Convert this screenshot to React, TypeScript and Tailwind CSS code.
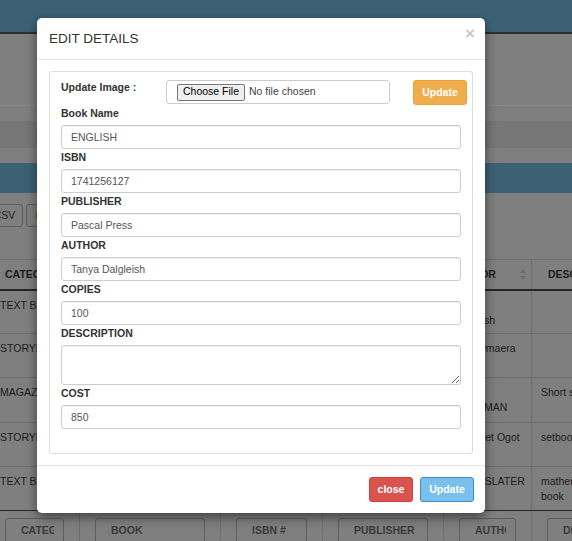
import React from "react";

const grid = "grid grid-cols-[90px_141px_102px_121px_88px_120px] -ml-[10px] w-max";

function SortIcon() {
  return (
    <svg width="6" height="11" viewBox="0 0 6 11" className="shrink-0">
      <path d="M3 0 L6 4 L0 4 Z" fill="#6b6b6b" />
      <path d="M3 11 L6 7 L0 7 Z" fill="#6b6b6b" />
    </svg>
  );
}

const headers = [
  { t: "CATEGORY", cls: "pl-[15px]" },
  { t: "BOOK NAME", cls: "pl-[15px]" },
  { t: "ISBN #", cls: "pl-[15px]" },
  { t: "PUBLISHER", cls: "pl-[15px]" },
  { t: "AUTHOR", cls: "pl-[7px]" },
  { t: "DESCRIPTION", cls: "pl-[16px]" },
];

const rows = [
  { b: "", c: ["TEXT BOOK", "ENGLISH", "1741256127", "Pascal Press", "Tanya\nDalgleish", ""] },
  { b: "border-t border-[#6e6e6e]", c: ["STORYBOOK", "THE RIVER", "1741256128", "Longhorn", "John Omaera", ""] },
  { b: "border-t border-[#6e6e6e]", c: ["MAGAZINE", "WEEKLY", "1741256129", "Oxford", "ALAN\nGOODMAN", "Short stories"] },
  { b: "border-t border-[#6e6e6e]", c: ["STORYBOOK", "THE PROMISED LAND", "1741256130", "EAEP", "Margaret Ogot", "setbook"] },
  { b: "border-t border-[#6e6e6e]", c: ["TEXT BOOK", "MATHEMATICS", "1741256131", "KLB", "ROSE SLATER", "mathematics book"] },
];

const cellPad = ["pl-[10px]", "pl-[9px]", "pl-[9px]", "pl-[9px]", "pl-[8px] pr-[2px] whitespace-pre-line", "pl-[9px] pr-[30px]"];

const footer = ["CATEGORY", "BOOK", "ISBN #", "PUBLISHER", "AUTHOR", "DESCRIPTION"];

function Field({ label, value }: { label: string; value: string }) {
  return (
    <div>
      <div className="h-[16px] text-[10.5px] leading-[16px] font-bold text-[#333]">{label}</div>
      <input
        readOnly
        value={value}
        className="mt-[4px] block h-[24px] w-full rounded-[3px] border border-[#ccc] bg-white px-[9px] text-[10.5px] text-[#555] shadow-[inset_0_1px_1px_rgba(0,0,0,0.075)] outline-none"
      />
    </div>
  );
}

export default function App() {
  return (
    <div className="relative h-[541px] w-[572px] overflow-hidden bg-[#7f7f7f] font-['Liberation_Sans',Arial,sans-serif] text-[10.5px] text-[#1c1c1c]">
      {/* background page */}
      <div className="h-[32px] bg-[#3c6177]" />
      <div className="h-[2px] bg-[#2f2f2f]" />
      <div className="h-[71px]" />
      <div className="h-px bg-[#878787]" />
      <div className="h-[15px]" />
      <div className="h-[27px] bg-[#777777]" />
      <div className="h-[15px]" />
      <div className="h-[30px] bg-[#3c6177]" />
      <div className="flex h-[66px] gap-[3px] pt-[11px] -ml-[14px]">
        <div className="flex h-[23px] w-[37px] items-center justify-center rounded-[3px] border border-[#5e5e5e] text-[#1f1f1f]">CSV</div>
        <div className="flex h-[23px] w-[44px] items-center justify-center rounded-[3px] border border-[#5e5e5e] text-[#6b4a1f]">Excel</div>
      </div>

      {/* table header */}
      <div className={`${grid} border-t border-[#6e6e6e] border-b-2 border-b-[#262626]`}>
        {headers.map((h, i) => (
          <div key={i} className={`flex h-[29px] items-center justify-between border-r border-[#6e6e6e] pr-[5px] font-bold whitespace-nowrap overflow-hidden ${h.cls}`}>
            <span>{h.t}</span>
            <SortIcon />
          </div>
        ))}
      </div>

      {/* rows */}
      {rows.map((r, ri) => (
        <div key={ri} className={`${grid} ${r.b}`}>
          {r.c.map((c, ci) => (
            <div key={ci} className={`${ri === 0 ? "h-[42px]" : ri === 2 ? "h-[44px]" : "h-[43px]"} overflow-hidden border-r border-[#6e6e6e] pt-[7px] leading-[15px] ${cellPad[ci]}`}>
              {c}
            </div>
          ))}
        </div>
      ))}
      <div className="h-px bg-[#262626]" />

      {/* footer filters */}
      <div className={grid}>
        {footer.map((f, i) => (
          <div key={i} className="h-[30px] border-r border-[#6e6e6e] px-[15px] pt-[7px]">
            <div className="flex h-[26px] items-center rounded-[3px] border border-[#5e5e5e] pl-[15px] pr-[9px] font-bold text-[#3a3a3a]">
              <span className="block overflow-hidden whitespace-nowrap">{f}</span>
            </div>
          </div>
        ))}
      </div>

      {/* modal */}
      <div className="absolute left-[37px] top-[18px] w-[448px] rounded-[5px] bg-white shadow-[0_4px_12px_rgba(0,0,0,0.5)]">
        <div className="flex items-start justify-between border-b border-[#e5e5e5] pl-[12px] pr-[10px] pt-[11px] pb-[11px]">
          <div className="text-[13.5px] leading-[19px] text-[#333]">EDIT DETAILS</div>
          <div className="mt-[-4px] text-[17px] font-bold leading-[17px] text-[#c8c8c8]">×</div>
        </div>
        <div className="px-[12px] py-[11px]">
          <div className="rounded-[3px] border border-[#ddd] px-[11px] pt-[8px] pb-[24px]">
            <div className="flex h-[25px] items-start">
              <div className="w-[105px] shrink-0 text-[10.5px] font-bold leading-[15px] text-[#333]">Update Image :</div>
              <div className="flex h-[24px] w-[224px] shrink-0 items-center rounded-[3px] border border-[#ccc] pl-[10px]">
                <div className="flex h-[17px] items-center rounded-[2px] border border-[#767676] bg-[#efefef] px-[5px] text-[10.5px] text-black">
                  Choose File
                </div>
                <span className="ml-[4px] text-[10.5px] text-[#444]">No file chosen</span>
              </div>
              <div className="ml-[23px] flex h-[25px] w-[54px] shrink-0 items-center justify-center rounded-[3px] border border-[#eea236] bg-[#f0ad4e] text-[10.5px] font-bold text-white">
                Update
              </div>
            </div>
            <Field label="Book Name" value="ENGLISH" />
            <Field label="ISBN" value="1741256127" />
            <Field label="PUBLISHER" value="Pascal Press" />
            <Field label="AUTHOR" value="Tanya Dalgleish" />
            <Field label="COPIES" value="100" />
            <div>
              <div className="h-[16px] text-[10.5px] leading-[16px] font-bold text-[#333]">DESCRIPTION</div>
              <textarea
                readOnly
                className="mt-[4px] block h-[40px] w-full rounded-[3px] border border-[#ccc] bg-white px-[9px] text-[10.5px] text-[#555] shadow-[inset_0_1px_1px_rgba(0,0,0,0.075)] outline-none"
              />
            </div>
            <Field label="COST" value="850" />
          </div>
        </div>
        <div className="flex justify-end gap-[7px] border-t border-[#e5e5e5] px-[11px] py-[11px]">
          <div className="flex h-[25px] w-[44px] items-center justify-center rounded-[3px] border border-[#d43f3a] bg-[#d9534f] text-[10.5px] font-bold text-white">
            close
          </div>
          <div className="flex h-[25px] w-[54px] items-center justify-center rounded-[3px] border border-[#3f8ccd] bg-[#79c1ec] text-[10.5px] font-bold text-white">
            Update
          </div>
        </div>
      </div>
    </div>
  );
}
